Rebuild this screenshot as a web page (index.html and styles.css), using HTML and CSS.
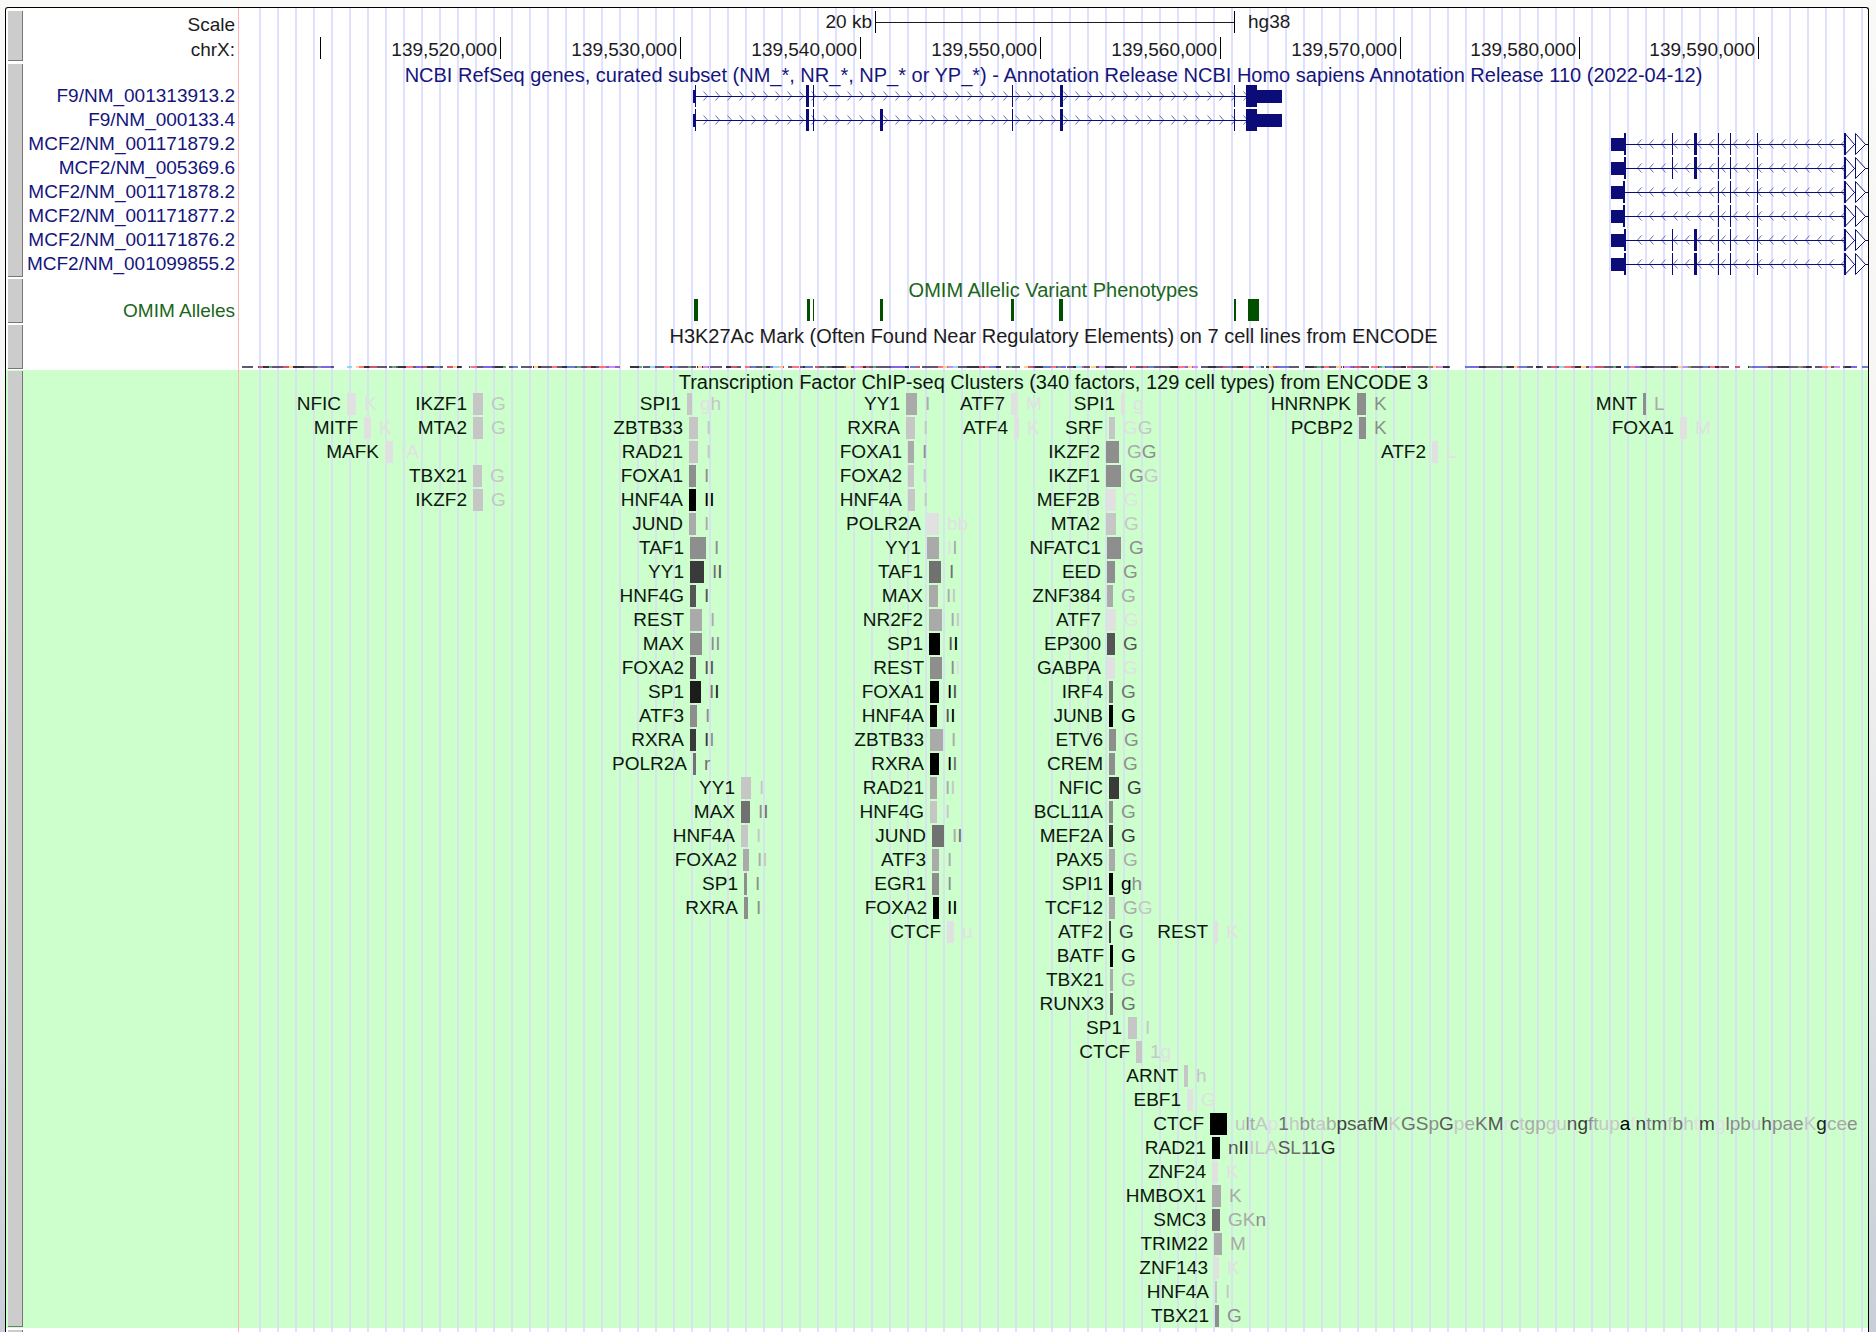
FILE: index.html
```html
<!DOCTYPE html>
<html lang="en">
<head>
<meta charset="utf-8">
<title>Genome Browser - hg38 chrX</title>
<link rel="stylesheet" href="styles.css">
</head>
<body>
<svg class="defs" width="0" height="0" aria-hidden="true">
  <defs>
    <pattern id="fwd" x="463" y="0" width="12" height="24" patternUnits="userSpaceOnUse"><path d="M1.500 7.500L5.500 12L1.500 16.500" class="chev"/></pattern>
    <pattern id="rev" x="1397" y="0" width="12" height="24" patternUnits="userSpaceOnUse"><path d="M5.500 7.500L1.500 12L5.500 16.500" class="chev"/></pattern>
    <g id="f9">
      <rect x="463" y="0" width="544" height="24" fill="url(#fwd)"/>
      <rect x="456" y="12" width="552" height="1"/>
      <rect x="454" y="6" width="2" height="13"/><rect x="456" y="1" width="1" height="22"/>
      <rect x="567" y="1" width="3" height="22"/><rect x="574" y="1" width="1" height="22"/>
      <rect x="773" y="1" width="1" height="22"/><rect x="821" y="1" width="3" height="22"/>
      <rect x="995" y="1" width="1" height="22"/><rect x="1007" y="1" width="11" height="22"/>
      <rect x="1018" y="6" width="25" height="13"/>
    </g>
    <g id="mcf">
      <rect x="1397" y="0" width="208" height="24" fill="url(#rev)"/>
      <rect x="1386" y="12" width="243" height="1"/>
      <rect x="1372" y="6" width="13" height="13"/>
      <rect x="1479" y="1" width="1" height="22"/><rect x="1491" y="1" width="1" height="22"/><rect x="1518" y="1" width="1" height="22"/>
      <path class="more" d="M1606 1.500L1615.500 12.500L1606 22.500zM1616.500 1.500L1626.500 12.500L1616.500 22.500z"/>
      <rect x="1605" y="1" width="2" height="22"/>
    </g>
    <g id="mcfLong"><use href="#mcf"/><rect x="1385" y="1" width="2" height="22"/><rect x="1433" y="1" width="1" height="22"/><rect x="1455" y="1" width="3" height="22"/></g>
    <g id="mcfShort"><use href="#mcf"/><rect x="1384" y="1" width="2" height="22"/></g>
  </defs>
</svg>

<main class="browser">
  <section class="track ruler">
    <div class="handle"></div>
    <div class="labels"><div>Scale</div><div>chrX:</div></div>
    <div class="data">
      <div class="row scale"><div class="bar" style="--x:636px;--w:360px"><b>20 kb</b><i>hg38</i></div></div>
      <div class="row">
        <div class="tick" style="--x:81px"></div>
        <div class="tick" style="--x:261px"><b>139,520,000</b></div>
        <div class="tick" style="--x:441px"><b>139,530,000</b></div>
        <div class="tick" style="--x:621px"><b>139,540,000</b></div>
        <div class="tick" style="--x:801px"><b>139,550,000</b></div>
        <div class="tick" style="--x:981px"><b>139,560,000</b></div>
        <div class="tick" style="--x:1161px"><b>139,570,000</b></div>
        <div class="tick" style="--x:1340px"><b>139,580,000</b></div>
        <div class="tick" style="--x:1519px"><b>139,590,000</b></div>
      </div>
    </div>
  </section>

  <section class="track refseq">
    <div class="handle"></div>
    <div class="labels">
      <div>F9/NM_001313913.2</div><div>F9/NM_000133.4</div><div>MCF2/NM_001171879.2</div><div>MCF2/NM_005369.6</div><div>MCF2/NM_001171878.2</div><div>MCF2/NM_001171877.2</div><div>MCF2/NM_001171876.2</div><div>MCF2/NM_001099855.2</div>
    </div>
    <div class="data">
      <h2>NCBI RefSeq genes, curated subset (NM_*, NR_*, NP_* or YP_*) - Annotation Release NCBI Homo sapiens Annotation Release 110 (2022-04-12)</h2>
      <svg class="gene"><use href="#f9"/></svg>
      <svg class="gene"><use href="#f9"/><rect x="641" y="1" width="3" height="22"/></svg>
      <svg class="gene"><use href="#mcfLong"/></svg>
      <svg class="gene"><use href="#mcfLong"/></svg>
      <svg class="gene"><use href="#mcfShort"/></svg>
      <svg class="gene"><use href="#mcfShort"/></svg>
      <svg class="gene"><use href="#mcfLong"/></svg>
      <svg class="gene"><use href="#mcfLong"/></svg>
    </div>
  </section>

  <section class="track omim">
    <div class="handle"></div>
    <div class="labels"><div>OMIM Alleles</div></div>
    <div class="data">
      <h2>OMIM Allelic Variant Phenotypes</h2>
      <div class="row">
        <div class="hit" style="--x:455px;--w:4px"></div><div class="hit" style="--x:568px;--w:3px"></div><div class="hit" style="--x:574px;--w:1px"></div><div class="hit" style="--x:641px;--w:3px"></div><div class="hit" style="--x:772px;--w:3px"></div><div class="hit" style="--x:820px;--w:4px"></div><div class="hit" style="--x:995px;--w:2px"></div><div class="hit" style="--x:1009px;--w:11px"></div>
      </div>
    </div>
  </section>

  <section class="track h3k">
    <div class="handle"></div>
    <div class="labels"></div>
    <div class="data">
      <h2>H3K27Ac Mark (Often Found Near Regulatory Elements) on 7 cell lines from ENCODE</h2>
      <svg class="signal" aria-hidden="true">
        <g fill="none" stroke-width="2">
          <path d="M3 1H1629" stroke="#4a3a5c" stroke-dasharray="11 5 32 3 41 12 0 18 23 2 28 3 7 4 12 5 14 7 36 4 9 3"/>
          <path d="M20 1H1629" stroke="#c83a5a" stroke-dasharray="5 19 9 31 4 43 7 26 6 14"/>
          <path d="M24 1H1629" stroke="#15101c" stroke-dasharray="8 21 12 17 5 34 9 29"/>
          <path d="M78 1H1629" stroke="#6a4ae8" stroke-dasharray="14 85 6 61 9 112"/>
          <path d="M108 1H1629" stroke="#7ad4f4" stroke-dasharray="5 118 6 174"/>
          <path d="M30 1H1629" stroke="#4a9a5a" stroke-dasharray="3 46 3 71 4 58"/>
          <path d="M50 1H1629" stroke="#ffc878" stroke-dasharray="4 63 5 92 4 77"/>
          <path d="M120 1H1629" stroke="#ff5a6a" stroke-dasharray="5 42 7 58 6 75"/>
          <path d="M195 1H1629" stroke="#4a6ac8" stroke-dasharray="6 73 5 49 8 97"/>
          <path d="M370 1H1629" stroke="#c878f0" stroke-dasharray="6 88 5 146"/>
        </g>
      </svg>
    </div>
  </section>

  <section class="track chip">
    <div class="handle"></div>
    <div class="labels"></div>
    <div class="data">
      <h2>Transcription Factor ChIP-seq Clusters (340 factors, 129 cell types) from ENCODE 3</h2>
      <div class="row">
        <div class="hit s1" style="--x:108px;--w:9px"><b>NFIC</b><i>K</i></div>
        <div class="hit s2" style="--x:234px;--w:10px"><b>IKZF1</b><i>G</i></div>
        <div class="hit s2" style="--x:448px;--w:5px"><b>SPI1</b><i><u class="s1">g</u>h</i></div>
        <div class="hit s3" style="--x:667px;--w:11px"><b>YY1</b><i>I</i></div>
        <div class="hit s1" style="--x:772px;--w:7px"><b>ATF7</b><i>M</i></div>
        <div class="hit s1" style="--x:882px;--w:4px"><b>SPI1</b><i>g</i></div>
        <div class="hit s4" style="--x:1118px;--w:9px"><b>HNRNPK</b><i>K</i></div>
        <div class="hit s4" style="--x:1404px;--w:3px"><b>MNT</b><i><u class="s3">L</u></i></div>
      </div>
      <div class="row">
        <div class="hit s1" style="--x:125px;--w:7px"><b>MITF</b><i>K</i></div>
        <div class="hit s2" style="--x:234px;--w:10px"><b>MTA2</b><i>G</i></div>
        <div class="hit s2" style="--x:450px;--w:9px"><b>ZBTB33</b><i>I</i></div>
        <div class="hit s2" style="--x:667px;--w:9px"><b>RXRA</b><i>I</i></div>
        <div class="hit s1" style="--x:775px;--w:5px"><b>ATF4</b><i>K</i></div>
        <div class="hit s2" style="--x:870px;--w:6px"><b>SRF</b><i><u class="s1">G</u>G</i></div>
        <div class="hit s4" style="--x:1120px;--w:7px"><b>PCBP2</b><i>K</i></div>
        <div class="hit s1" style="--x:1441px;--w:7px"><b>FOXA1</b><i>M</i></div>
      </div>
      <div class="row">
        <div class="hit s1" style="--x:146px;--w:8px"><b>MAFK</b><i>IA</i></div>
        <div class="hit s2" style="--x:450px;--w:9px"><b>RAD21</b><i>I</i></div>
        <div class="hit s3" style="--x:669px;--w:6px"><b>FOXA1</b><i><u class="s4">I</u></i></div>
        <div class="hit s4" style="--x:867px;--w:13px"><b>IKZF2</b><i><u class="s3">G</u>G</i></div>
        <div class="hit s1" style="--x:1193px;--w:6px"><b>ATF2</b><i>L</i></div>
      </div>
      <div class="row">
        <div class="hit s2" style="--x:234px;--w:9px"><b>TBX21</b><i>G</i></div>
        <div class="hit s4" style="--x:450px;--w:7px"><b>FOXA1</b><i>I</i></div>
        <div class="hit s2" style="--x:669px;--w:6px"><b>FOXA2</b><i>I</i></div>
        <div class="hit s4" style="--x:867px;--w:15px"><b>IKZF1</b><i>G<u class="s2">G</u></i></div>
      </div>
      <div class="row">
        <div class="hit s2" style="--x:234px;--w:10px"><b>IKZF2</b><i>G</i></div>
        <div class="hit s9" style="--x:450px;--w:7px"><b>HNF4A</b><i>II</i></div>
        <div class="hit s2" style="--x:669px;--w:7px"><b>HNF4A</b><i>I</i></div>
        <div class="hit s1" style="--x:867px;--w:10px"><b>MEF2B</b><i>G</i></div>
      </div>
      <div class="row">
        <div class="hit s3" style="--x:450px;--w:7px"><b>JUND</b><i>I</i></div>
        <div class="hit s1" style="--x:688px;--w:12px"><b>POLR2A</b><i>bb</i></div>
        <div class="hit s2" style="--x:867px;--w:10px"><b>MTA2</b><i>G</i></div>
      </div>
      <div class="row">
        <div class="hit s4" style="--x:451px;--w:16px"><b>TAF1</b><i>I</i></div>
        <div class="hit s3" style="--x:688px;--w:12px"><b>YY1</b><i><u class="s1">I</u>I</i></div>
        <div class="hit s4" style="--x:868px;--w:14px"><b>NFATC1</b><i>G</i></div>
      </div>
      <div class="row">
        <div class="hit s7" style="--x:451px;--w:14px"><b>YY1</b><i><u class="s5">I</u><u class="s6">I</u></i></div>
        <div class="hit s5" style="--x:690px;--w:12px"><b>TAF1</b><i>I</i></div>
        <div class="hit s4" style="--x:868px;--w:8px"><b>EED</b><i>G</i></div>
      </div>
      <div class="row">
        <div class="hit s6" style="--x:451px;--w:6px"><b>HNF4G</b><i>I</i></div>
        <div class="hit s3" style="--x:690px;--w:9px"><b>MAX</b><i>I<u class="s2">I</u></i></div>
        <div class="hit s3" style="--x:868px;--w:6px"><b>ZNF384</b><i>G</i></div>
      </div>
      <div class="row">
        <div class="hit s3" style="--x:451px;--w:12px"><b>REST</b><i>I</i></div>
        <div class="hit s3" style="--x:690px;--w:13px"><b>NR2F2</b><i>I<u class="s2">I</u></i></div>
        <div class="hit s1" style="--x:868px;--w:9px"><b>ATF7</b><i>G</i></div>
      </div>
      <div class="row">
        <div class="hit s4" style="--x:451px;--w:12px"><b>MAX</b><i>II</i></div>
        <div class="hit s9" style="--x:690px;--w:11px"><b>SP1</b><i><u class="s6">I</u>I</i></div>
        <div class="hit s6" style="--x:868px;--w:8px"><b>EP300</b><i>G</i></div>
      </div>
      <div class="row">
        <div class="hit s6" style="--x:451px;--w:6px"><b>FOXA2</b><i>II</i></div>
        <div class="hit s4" style="--x:691px;--w:12px"><b>REST</b><i>I<u class="s1">I</u></i></div>
        <div class="hit s1" style="--x:868px;--w:8px"><b>GABPA</b><i>G</i></div>
      </div>
      <div class="row">
        <div class="hit s8" style="--x:451px;--w:11px"><b>SP1</b><i><u class="s5">I</u>I</i></div>
        <div class="hit s9" style="--x:691px;--w:9px"><b>FOXA1</b><i>I<u class="s6">I</u></i></div>
        <div class="hit s5" style="--x:870px;--w:4px"><b>IRF4</b><i>G</i></div>
      </div>
      <div class="row">
        <div class="hit s4" style="--x:451px;--w:7px"><b>ATF3</b><i>I</i></div>
        <div class="hit s9" style="--x:691px;--w:7px"><b>HNF4A</b><i><u class="s6">I</u>I</i></div>
        <div class="hit s9" style="--x:870px;--w:4px"><b>JUNB</b><i>G</i></div>
      </div>
      <div class="row">
        <div class="hit s7" style="--x:451px;--w:6px"><b>RXRA</b><i>I<u class="s4">I</u></i></div>
        <div class="hit s3" style="--x:691px;--w:13px"><b>ZBTB33</b><i>I</i></div>
        <div class="hit s4" style="--x:870px;--w:7px"><b>ETV6</b><i>G</i></div>
      </div>
      <div class="row">
        <div class="hit s5" style="--x:454px;--w:3px"><b>POLR2A</b><i>r</i></div>
        <div class="hit s9" style="--x:691px;--w:9px"><b>RXRA</b><i>I<u class="s5">I</u></i></div>
        <div class="hit s4" style="--x:870px;--w:6px"><b>CREM</b><i>G</i></div>
      </div>
      <div class="row">
        <div class="hit s2" style="--x:502px;--w:10px"><b>YY1</b><i>I</i></div>
        <div class="hit s3" style="--x:691px;--w:7px"><b>RAD21</b><i>I<u class="s2">I</u></i></div>
        <div class="hit s7" style="--x:870px;--w:10px"><b>NFIC</b><i>G</i></div>
      </div>
      <div class="row">
        <div class="hit s5" style="--x:502px;--w:9px"><b>MAX</b><i><u class="s4">I</u>I</i></div>
        <div class="hit s2" style="--x:691px;--w:7px"><b>HNF4G</b><i>I</i></div>
        <div class="hit s4" style="--x:870px;--w:4px"><b>BCL11A</b><i>G</i></div>
      </div>
      <div class="row">
        <div class="hit s2" style="--x:502px;--w:7px"><b>HNF4A</b><i>I</i></div>
        <div class="hit s5" style="--x:693px;--w:12px"><b>JUND</b><i><u class="s3">I</u>I</i></div>
        <div class="hit s7" style="--x:870px;--w:4px"><b>MEF2A</b><i>G</i></div>
      </div>
      <div class="row">
        <div class="hit s3" style="--x:504px;--w:6px"><b>FOXA2</b><i>I<u class="s2">I</u></i></div>
        <div class="hit s3" style="--x:693px;--w:7px"><b>ATF3</b><i>I</i></div>
        <div class="hit s3" style="--x:870px;--w:6px"><b>PAX5</b><i>G</i></div>
      </div>
      <div class="row">
        <div class="hit s4" style="--x:505px;--w:3px"><b>SP1</b><i>I</i></div>
        <div class="hit s4" style="--x:693px;--w:7px"><b>EGR1</b><i>I</i></div>
        <div class="hit s9" style="--x:870px;--w:4px"><b>SPI1</b><i>g<u class="s4">h</u></i></div>
      </div>
      <div class="row">
        <div class="hit s4" style="--x:505px;--w:4px"><b>RXRA</b><i>I</i></div>
        <div class="hit s9" style="--x:694px;--w:6px"><b>FOXA2</b><i>II</i></div>
        <div class="hit s3" style="--x:870px;--w:6px"><b>TCF12</b><i>G<u class="s2">G</u></i></div>
      </div>
      <div class="row">
        <div class="hit s1" style="--x:708px;--w:7px"><b>CTCF</b><i>u</i></div>
        <div class="hit s7" style="--x:870px;--w:2px"><b>ATF2</b><i>G</i></div>
        <div class="hit s1" style="--x:975px;--w:4px"><b>REST</b><i>K</i></div>
      </div>
      <div class="row"><div class="hit s9" style="--x:871px;--w:3px"><b>BATF</b><i>G</i></div></div>
      <div class="row"><div class="hit s3" style="--x:871px;--w:3px"><b>TBX21</b><i>G</i></div></div>
      <div class="row"><div class="hit s5" style="--x:871px;--w:3px"><b>RUNX3</b><i>G</i></div></div>
      <div class="row"><div class="hit s2" style="--x:889px;--w:9px"><b>SP1</b><i>I</i></div></div>
      <div class="row"><div class="hit s2" style="--x:897px;--w:6px"><b>CTCF</b><i>1<u class="s1">g</u></i></div></div>
      <div class="row"><div class="hit s2" style="--x:945px;--w:4px"><b>ARNT</b><i>h</i></div></div>
      <div class="row"><div class="hit s1" style="--x:948px;--w:6px"><b>EBF1</b><i>G</i></div></div>
      <div class="row"><div class="hit s9" style="--x:971px;--w:17px"><b>CTCF</b><i><u class="s2">u</u><u class="s4">l</u><u class="s3">t</u><u class="s2">A</u><u class="s1">p</u><u class="s5">1</u><u class="s2">h</u><u class="s4">b</u><u class="s3">t</u><u class="s2">a</u><u class="s3">b</u><u class="s7">p</u><u class="s6">s</u><u class="s6">a</u><u class="s6">f</u><u class="s8">M</u><u class="s2">K</u><u class="s5">GS</u><u class="s4">p</u><u class="s6">G</u><u class="s2">p</u><u class="s3">e</u><u class="s5">K</u><u class="s6">M</u><u class="s1">r</u><u class="s5">c</u><u class="s2">t</u><u class="s3">gp</u><u class="s2">gu</u><u class="s6">n</u><u class="s7">g</u><u class="s4">f</u><u class="s3">t</u><u class="s2">up</u>a<u class="s1">f</u><u class="s7">n</u><u class="s4">t</u><u class="s6">m</u><u class="s2">f</u><u class="s5">b</u><u class="s2">h</u><u class="s1">t</u><u class="s7">m</u><u class="s1">g</u><u class="s5">l</u><u class="s4">pb</u><u class="s2">u</u><u class="s6">h</u><u class="s4">pae</u><u class="s2">K</u><u class="s8">g</u><u class="s3">ce</u><u class="s4">e</u></i></div></div>
      <div class="row"><div class="hit s9" style="--x:973px;--w:8px"><b>RAD21</b><i><u class="s6">n</u><u class="s8">II</u><u class="s2">ILA</u><u class="s6">S</u><u class="s5">L</u><u class="s6">1</u><u class="s7">1</u><u class="s8">G</u></i></div></div>
      <div class="row"><div class="hit s1" style="--x:973px;--w:6px"><b>ZNF24</b><i>K</i></div></div>
      <div class="row"><div class="hit s3" style="--x:973px;--w:9px"><b>HMBOX1</b><i>K</i></div></div>
      <div class="row"><div class="hit s5" style="--x:973px;--w:8px"><b>SMC3</b><i><u class="s3">GK</u><u class="s4">n</u></i></div></div>
      <div class="row"><div class="hit s3" style="--x:975px;--w:8px"><b>TRIM22</b><i>M</i></div></div>
      <div class="row"><div class="hit s1" style="--x:975px;--w:5px"><b>ZNF143</b><i>K</i></div></div>
      <div class="row"><div class="hit s2" style="--x:976px;--w:2px"><b>HNF4A</b><i>I</i></div></div>
      <div class="row"><div class="hit s4" style="--x:976px;--w:4px"><b>TBX21</b><i>G</i></div></div>
    </div>
  </section>

  <section class="track next">
    <div class="handle"></div>
    <div class="labels"></div>
    <div class="data"></div>
  </section>
</main>
</body>
</html>
```
FILE: styles.css
```css
* {
  box-sizing: border-box;
}

body {
  margin: 0;
  padding: 7px 7px 0 5px;
  min-height: 100vh;
  background: linear-gradient(#f9f9f8 0, #f5f4f2 42%, #cdd2da 92%, #c9cdd8 100%);
  color: #1c1c1c;
  font: 19px/24px "Liberation Sans", Arial, Helvetica, sans-serif;
}

.defs {
  position: absolute;
}

/* Framed image area holding all the tracks */
.browser {
  display: flex;
  flex-direction: column;
  min-height: calc(100vh - 7px);
  border: 1px solid #000;
  border-bottom: 0;
  border-radius: 3px 3px 0 0;
  background: #fff;
  overflow: hidden;
}

.track {
  --title: 20px;
  --grid: #e0e0ff;
  display: flex;
  padding-left: 2px;
}

.handle {
  flex: 0 0 15px;
  margin: 1px 0;
  background: #ccc;
  border: solid #777;
  border-width: 0 1px 1px 0;
}

.labels {
  flex: 0 0 215px;
  padding: var(--title) 3px 0 0;
  text-align: right;
  white-space: nowrap;
}

.data {
  flex: 1;
  min-width: 0;
  overflow: hidden;
  border-left: 1px solid #ffb4b4;
  background: repeating-linear-gradient(90deg, var(--grid) 0 2px, transparent 2px 18px) 20px 0 no-repeat;
}

h2 {
  height: var(--title);
  margin: 0;
  font: inherit;
  font-size: 20px;
  text-align: center;
  white-space: nowrap;
}

.row {
  position: relative;
  height: 24px;
}

b,
i,
u {
  font-style: normal;
  font-weight: normal;
  text-decoration: none;
}

/* Coordinate ruler */
.ruler {
  padding-top: 3px;
  height: 55px;
}

.ruler .handle {
  margin: 0 0 2px;
}

.ruler .labels {
  padding-top: 1px;
  line-height: 25px;
}

.ruler .data {
  display: flex;
  flex-direction: column;
  gap: 2px;
  margin-top: -3px;
  padding-top: 3px;
}

.ruler .row {
  line-height: 26px;
}

.ruler .scale {
  line-height: 22px;
}

.bar,
.tick {
  position: absolute;
  left: var(--x);
  height: 22px;
  white-space: nowrap;
}

.bar {
  width: var(--w);
  border: solid #000;
  border-width: 0 1px;
  background: linear-gradient(#1c1c1c, #1c1c1c) 0 11px / 100% 1px no-repeat;
}

.tick {
  border-left: 1px solid #000;
}

.bar b,
.tick b {
  position: absolute;
  right: calc(100% + 4px);
}

.bar i {
  position: absolute;
  left: calc(100% + 14px);
}

/* Gene models */
.refseq {
  --title: 21px;
  color: #15157c;
}

.refseq .data,
.omim .data {
  padding-bottom: 2px;
}

.gene {
  display: block;
  width: 100%;
  height: 24px;
  fill: #0c0c78;
  shape-rendering: crispEdges;
}

.chev {
  fill: none;
  stroke: #6a6ab4;
  stroke-width: 1;
  shape-rendering: auto;
}

.more {
  fill: #fff;
  stroke: #0c0c78;
  stroke-width: 1;
  shape-rendering: auto;
}

/* OMIM alleles */
.omim {
  --tone: #005000;
  color: #1a661a;
}

.omim .labels {
  line-height: 26px;
}

/* Layered histone mark signal */
.h3k .data {
  height: 46px;
}

.signal {
  display: block;
  width: 100%;
  height: 2px;
  margin-top: 22px;
  opacity: .85;
}

/* Transcription factor clusters, shaded by score */
.chip {
  --title: 22px;
  --grid: #d6e4ee;
  background: #cfc;
  color: #0c180c;
}

.hit {
  position: absolute;
  top: 1px;
  left: var(--x);
  width: var(--w);
  height: 22px;
  line-height: 22px;
  background: var(--tone);
}

.hit b {
  position: absolute;
  right: calc(100% + 6px);
}

.hit i {
  position: absolute;
  left: calc(100% + 8px);
  color: var(--tone);
  white-space: nowrap;
}

.hit u {
  color: var(--tone);
}

.s1 { --tone: #e1e1e1; }
.s2 { --tone: #c6c6c6; }
.s3 { --tone: #aaa; }
.s4 { --tone: #8e8e8e; }
.s5 { --tone: #717171; }
.s6 { --tone: #555; }
.s7 { --tone: #3a3a3a; }
.s8 { --tone: #1c1c1c; }
.s9 { --tone: #000; }

.next {
  flex: 1;
}

.next .handle {
  margin-top: 2px;
  border-bottom: 0;
}
```
